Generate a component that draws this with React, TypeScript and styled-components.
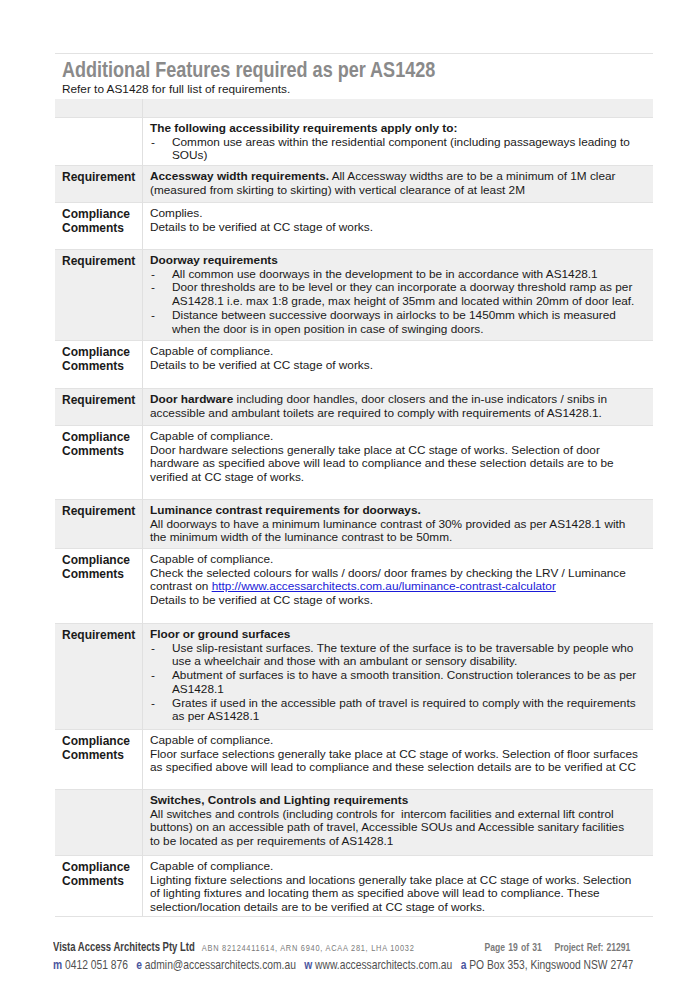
import * as React from 'react';
import styled, { createGlobalStyle } from 'styled-components';

const GlobalStyle = createGlobalStyle`
  html, body {
    margin: 0;
    padding: 0;
    background: #ffffff;
  }
  body {
    font-family: "Liberation Sans", Arial, sans-serif;
    color: #1a1a1a;
  }
`;

// no narrow Arial installed, so condensed bits are squeezed with scaleX
const TITLE_SQUEEZE = 0.82;
const FOOTER_SQUEEZE = 0.78;

const Page = styled.div`
  width: 694px;
  height: 989px;
  box-sizing: border-box;
  padding: 53px 41px 0 55px;
  display: flex;
  flex-direction: column;
  overflow: hidden;
`;

const TopRule = styled.div`
  height: 1px;
  background: #e2e2e2;
`;

const Title = styled.h1`
  margin: 4px 0 0 7px;
  width: ${100 / TITLE_SQUEEZE}%;
  font-weight: bold;
  font-size: 22px;
  line-height: 24px;
  color: #8a8a8a;
  white-space: nowrap;
  transform: scaleX(${TITLE_SQUEEZE});
  transform-origin: left top;
`;

const Subtitle = styled.p`
  margin: 0 0 0 7px;
  font-size: 11.8px;
  line-height: 14px;
  color: #1a1a1a;
`;

const Table = styled.div`
  margin-top: 3px;
  display: grid;
  grid-template-columns: 88px 1fr;
`;

const Row = styled.div<{ $shade?: boolean; $height: number }>`
  display: contents;
  & > div {
    background: ${p => (p.$shade ? '#efefef' : '#ffffff')};
    border-bottom: 1px solid #e2e2e2;
    height: ${p => p.$height}px;
  }
`;

const Label = styled.div`
  box-sizing: border-box;
  padding: 4px 0 0 7px;
  border-right: 1px solid #e0e0e0;
  font-weight: bold;
  font-size: 12px;
  line-height: 14px;
  color: #1a1a1a;
`;

const Body = styled.div`
  box-sizing: border-box;
  padding: 4px 0 0 7px;
  font-size: 11.8px;
  line-height: 13.7px;
  color: #1a1a1a;
  white-space: nowrap;
  overflow: hidden;
`;

const Strong = styled.span`
  font-weight: bold;
`;

const Bullets = styled.ul`
  list-style: none;
  margin: 0;
  padding: 0;
`;

const Bullet = styled.li`
  display: flex;
  &::before {
    content: '-';
    flex: 0 0 21px;
    padding-left: 1px;
  }
`;

const Link = styled.a`
  color: #1a1ad8;
  text-decoration: underline;
`;

const Footer = styled.footer`
  margin: 23px 0 0 -2px;
  width: ${600 / FOOTER_SQUEEZE}px;
  color: #4a4a4a;
  transform: scaleX(${FOOTER_SQUEEZE});
  transform-origin: left top;
`;

const FooterTop = styled.div`
  display: flex;
  align-items: baseline;
  white-space: nowrap;
`;

const Company = styled.span`
  font-weight: bold;
  font-size: 12.2px;
  color: #3e3e3e;
`;

const Numbers = styled.span`
  margin-left: 9px;
  font-size: 9.5px;
  letter-spacing: 0.95px;
  color: #7a7a7a;
`;

const PageInfo = styled.span`
  margin-left: auto;
  margin-right: 29px;
  font-weight: bold;
  font-size: 11px;
  word-spacing: 1px;
  color: #7a7a7a;
`;

const Contacts = styled.div`
  margin-top: 3px;
  font-size: 13.2px;
  color: #505050;
  white-space: nowrap;
`;

const Key = styled.span`
  font-weight: bold;
  color: #4b56a0;
  margin-left: 7px;
  &:first-child {
    margin-left: 0;
  }
`;

interface Item {
  label?: string;
  shade?: boolean;
  height: number;
  content?: React.ReactNode;
}

const items: Item[] = [
  { shade: true, height: 19 },
  {
    height: 48,
    content: (
      <>
        <Strong>The following accessibility requirements apply only to:</Strong>
        <Bullets>
          <Bullet>
            Common use areas within the residential component (including passageways leading to
            <br />
            SOUs)
          </Bullet>
        </Bullets>
      </>
    ),
  },
  {
    label: 'Requirement',
    shade: true,
    height: 37,
    content: (
      <>
        <Strong>Accessway width requirements.</Strong> All Accessway widths are to be a minimum of 1M clear
        <br />
        (measured from skirting to skirting) with vertical clearance of at least 2M
      </>
    ),
  },
  {
    label: 'Compliance Comments',
    height: 47,
    content: (
      <>
        Complies.
        <br />
        Details to be verified at CC stage of works.
      </>
    ),
  },
  {
    label: 'Requirement',
    shade: true,
    height: 91,
    content: (
      <>
        <Strong>Doorway requirements</Strong>
        <Bullets>
          <Bullet>All common use doorways in the development to be in accordance with AS1428.1</Bullet>
          <Bullet>
            Door thresholds are to be level or they can incorporate a doorway threshold ramp as per
            <br />
            AS1428.1 i.e. max 1:8 grade, max height of 35mm and located within 20mm of door leaf.
          </Bullet>
          <Bullet>
            Distance between successive doorways in airlocks to be 1450mm which is measured
            <br />
            when the door is in open position in case of swinging doors.
          </Bullet>
        </Bullets>
      </>
    ),
  },
  {
    label: 'Compliance Comments',
    height: 48,
    content: (
      <>
        Capable of compliance.
        <br />
        Details to be verified at CC stage of works.
      </>
    ),
  },
  {
    label: 'Requirement',
    shade: true,
    height: 37,
    content: (
      <>
        <Strong>Door hardware</Strong> including door handles, door closers and the in-use indicators / snibs in
        <br />
        accessible and ambulant toilets are required to comply with requirements of AS1428.1.
      </>
    ),
  },
  {
    label: 'Compliance Comments',
    height: 74,
    content: (
      <>
        Capable of compliance.
        <br />
        Door hardware selections generally take place at CC stage of works. Selection of door
        <br />
        hardware as specified above will lead to compliance and these selection details are to be
        <br />
        verified at CC stage of works.
      </>
    ),
  },
  {
    label: 'Requirement',
    shade: true,
    height: 49,
    content: (
      <>
        <Strong>Luminance contrast requirements for doorways.</Strong>
        <br />
        All doorways to have a minimum luminance contrast of 30% provided as per AS1428.1 with
        <br />
        the minimum width of the luminance contrast to be 50mm.
      </>
    ),
  },
  {
    label: 'Compliance Comments',
    height: 75,
    content: (
      <>
        Capable of compliance.
        <br />
        Check the selected colours for walls / doors/ door frames by checking the LRV / Luminance
        <br />
        contrast on <Link href="#">http://www.accessarchitects.com.au/luminance-contrast-calculator</Link>
        <br />
        Details to be verified at CC stage of works.
      </>
    ),
  },
  {
    label: 'Requirement',
    shade: true,
    height: 106,
    content: (
      <>
        <Strong>Floor or ground surfaces</Strong>
        <Bullets>
          <Bullet>
            Use slip-resistant surfaces. The texture of the surface is to be traversable by people who
            <br />
            use a wheelchair and those with an ambulant or sensory disability.
          </Bullet>
          <Bullet>
            Abutment of surfaces is to have a smooth transition. Construction tolerances to be as per
            <br />
            AS1428.1
          </Bullet>
          <Bullet>
            Grates if used in the accessible path of travel is required to comply with the requirements
            <br />
            as per AS1428.1
          </Bullet>
        </Bullets>
      </>
    ),
  },
  {
    label: 'Compliance Comments',
    height: 60,
    content: (
      <>
        Capable of compliance.
        <br />
        Floor surface selections generally take place at CC stage of works. Selection of floor surfaces
        <br />
        as specified above will lead to compliance and these selection details are to be verified at CC
      </>
    ),
  },
  {
    shade: true,
    height: 66,
    content: (
      <>
        <Strong>Switches, Controls and Lighting requirements</Strong>
        <br />
        All switches and controls (including controls for&nbsp; intercom facilities and external lift control
        <br />
        buttons) on an accessible path of travel, Accessible SOUs and Accessible sanitary facilities
        <br />
        to be located as per requirements of AS1428.1
      </>
    ),
  },
  {
    label: 'Compliance Comments',
    height: 61,
    content: (
      <>
        Capable of compliance.
        <br />
        Lighting fixture selections and locations generally take place at CC stage of works. Selection
        <br />
        of lighting fixtures and locating them as specified above will lead to compliance. These
        <br />
        selection/location details are to be verified at CC stage of works.
      </>
    ),
  },
];

export default function App() {
  return (
    <>
      <GlobalStyle />
      <Page>
        <TopRule />
        <Title>Additional Features required as per AS1428</Title>
        <Subtitle>Refer to AS1428 for full list of requirements.</Subtitle>
        <Table>
          {items.map((item, index) => (
            <Row key={index} $shade={item.shade} $height={item.height}>
              <Label>{item.label}</Label>
              <Body>{item.content}</Body>
            </Row>
          ))}
        </Table>
        <Footer>
          <FooterTop>
            <Company>Vista Access Architects Pty Ltd</Company>
            <Numbers>ABN 82124411614, ARN 6940, ACAA 281, LHA 10032</Numbers>
            <PageInfo>Page 19 of 31&nbsp;&nbsp;&nbsp; Project Ref: 21291</PageInfo>
          </FooterTop>
          <Contacts>
            <Key>m</Key> 0412 051 876 <Key>e</Key> admin@accessarchitects.com.au <Key>w</Key>{' '}
            www.accessarchitects.com.au <Key>a</Key> PO Box 353, Kingswood NSW 2747
          </Contacts>
        </Footer>
      </Page>
    </>
  );
}
